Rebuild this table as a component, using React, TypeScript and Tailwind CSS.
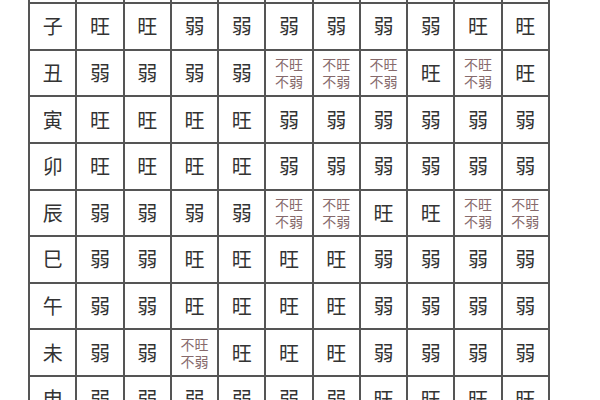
const W = '旺';
const R = '弱';
const M = 'mid'; // 不旺不弱

// 地支 rows and their ten columns
const rows: [string, string[]][] = [
  ['子', [W, W, R, R, R, R, R, R, W, W]],
  ['丑', [R, R, R, R, M, M, M, W, M, W]],
  ['寅', [W, W, W, W, R, R, R, R, R, R]],
  ['卯', [W, W, W, W, R, R, R, R, R, R]],
  ['辰', [R, R, R, R, M, M, W, W, M, M]],
  ['巳', [R, R, W, W, W, W, R, R, R, R]],
  ['午', [R, R, W, W, W, W, R, R, R, R]],
  ['未', [R, R, M, W, W, W, R, R, R, R]],
  ['申', [R, R, R, R, R, R, W, W, W, W]],
];

function Cell({ value }: { value: string }) {
  return (
    <div className="flex items-center justify-center border-r-2 border-b-2 border-[#555]">
      {value === M ? (
        <p className="text-center text-[14px] leading-[17px] text-[#866a6c]">
          不旺
          <br />
          不弱
        </p>
      ) : (
        <span className="text-[20px] leading-none text-[#333]">{value}</span>
      )}
    </div>
  );
}

export default function App() {
  return (
    <div
      className="w-[600px] h-[400px] overflow-hidden bg-white"
      style={{ fontFamily: '"Noto Sans CJK SC", "Noto Sans", sans-serif' }}
    >
      <div className="ml-[28px] mt-[-42.6px] w-[522px] grid grid-cols-[repeat(11,minmax(0,1fr))] auto-rows-[46.625px] border-l-2 border-[#555]">
        {/* partially visible row above the top edge */}
        {Array.from({ length: 11 }).map((_, i) => (
          <div key={'top' + i} className="border-r-2 border-b-2 border-[#555]" />
        ))}
        {rows.map(([branch, cells]) => (
          <div key={branch} className="contents">
            <Cell value={branch} />
            {cells.map((c, i) => (
              <Cell key={i} value={c} />
            ))}
          </div>
        ))}
      </div>
    </div>
  );
}
